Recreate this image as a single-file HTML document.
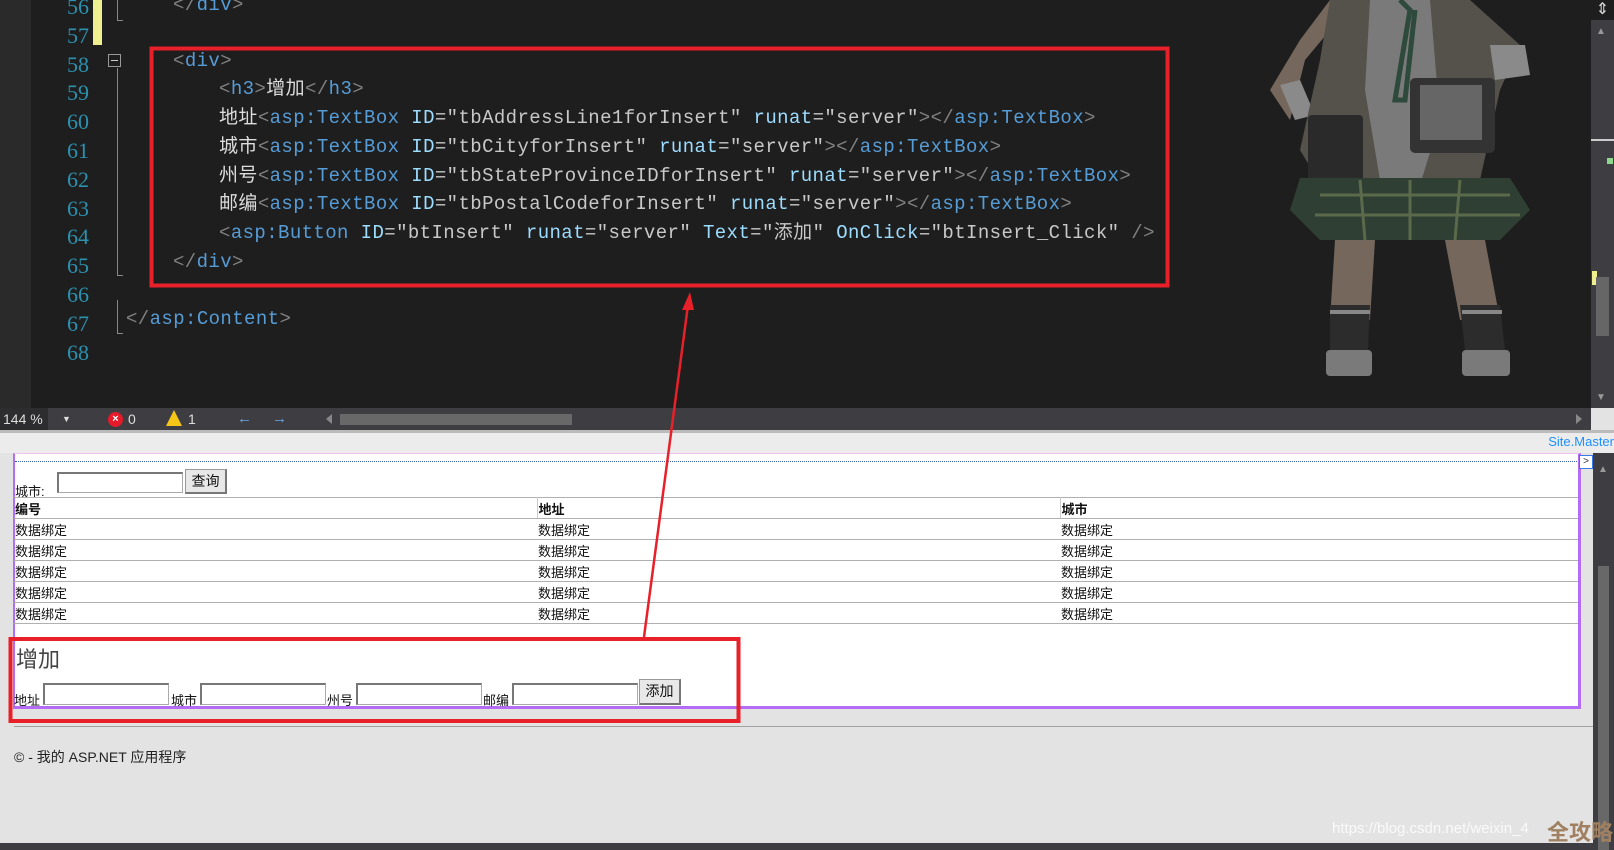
<!DOCTYPE html>
<html><head><meta charset="utf-8"><style>
*{margin:0;padding:0;box-sizing:border-box}
body{width:1614px;height:850px;overflow:hidden;background:#e3e3e3;position:relative;font-family:"Liberation Sans","Noto Sans CJK SC",sans-serif}
.a{position:absolute}
#ed{left:0;top:0;width:1614px;height:408px;background:#1e1e1e}
.ln{position:absolute;left:40px;width:49px;text-align:right;color:#2b91af;font-family:"Liberation Serif","Noto Serif CJK SC",serif;font-size:22px;line-height:29px}
.cd{position:absolute;font-family:"Liberation Mono","Noto Sans CJK SC",monospace;font-size:19px;line-height:29px;white-space:pre;color:#dcdcdc;letter-spacing:0.4px}
.g{color:#808080}.t{color:#569cd6}.at{color:#9cdcfe}.v{color:#c8c8c8}
.tb{position:absolute;background:#fff;border:1px solid #aaa;border-top:2px solid #777;border-left:2px solid #777}
.bt{position:absolute;background:#e8e8e8;border:1px solid #999;border-right:2px solid #777;border-bottom:2px solid #777;font-size:14px;text-align:center;line-height:22px;color:#111}
.lb{position:absolute;font-size:13px;color:#111}
td{font-size:13px;height:21px;border-bottom:1px solid #b0b0b0;padding:0 1px;vertical-align:middle;color:#111}
</style></head><body>
<div id="ed" class="a"></div>
<div class="a" style="left:0;top:0;width:31px;height:408px;background:#2a2a2a"></div>
<div class="a" style="left:93px;top:0;width:9px;height:45px;background:#efef8f"></div>
<div class="ln" style="top:-8px">56</div><div class="ln" style="top:21px">57</div><div class="ln" style="top:50px">58</div><div class="ln" style="top:78px">59</div><div class="ln" style="top:107px">60</div><div class="ln" style="top:136px">61</div><div class="ln" style="top:165px">62</div><div class="ln" style="top:194px">63</div><div class="ln" style="top:222px">64</div><div class="ln" style="top:251px">65</div><div class="ln" style="top:280px">66</div><div class="ln" style="top:309px">67</div><div class="ln" style="top:338px">68</div>
<div class="a" style="left:117px;top:0;width:1px;height:20px;background:#888"></div>
<div class="a" style="left:117px;top:20px;width:6px;height:1px;background:#888"></div>
<div class="a" style="left:108px;top:54px;width:13px;height:13px;border:1px solid #999;background:#1e1e1e"></div>
<div class="a" style="left:111px;top:60px;width:7px;height:1px;background:#ccc"></div>
<div class="a" style="left:117px;top:68px;width:1px;height:208px;background:#888"></div>
<div class="a" style="left:117px;top:275px;width:6px;height:1px;background:#888"></div>
<div class="a" style="left:117px;top:300px;width:1px;height:33px;background:#888"></div>
<div class="a" style="left:117px;top:333px;width:6px;height:1px;background:#888"></div>
<div class="cd" style="left:173px;top:-9px"><span class="g">&lt;/</span><span class="t">div</span><span class="g">&gt;</span></div>
<div class="cd" style="left:173px;top:47px"><span class="g">&lt;</span><span class="t">div</span><span class="g">&gt;</span></div>
<div class="cd" style="left:219px;top:75px"><span class="g">&lt;</span><span class="t">h3</span><span class="g">&gt;</span>增加<span class="g">&lt;/</span><span class="t">h3</span><span class="g">&gt;</span></div>
<div class="cd" style="left:219px;top:104px">地址<span class="g">&lt;</span><span class="t">asp:TextBox</span> <span class="at">ID</span><span class="v">="tbAddressLine1forInsert"</span> <span class="at">runat</span><span class="v">="server"</span><span class="g">&gt;&lt;/</span><span class="t">asp:TextBox</span><span class="g">&gt;</span></div>
<div class="cd" style="left:219px;top:133px">城市<span class="g">&lt;</span><span class="t">asp:TextBox</span> <span class="at">ID</span><span class="v">="tbCityforInsert"</span> <span class="at">runat</span><span class="v">="server"</span><span class="g">&gt;&lt;/</span><span class="t">asp:TextBox</span><span class="g">&gt;</span></div>
<div class="cd" style="left:219px;top:162px">州号<span class="g">&lt;</span><span class="t">asp:TextBox</span> <span class="at">ID</span><span class="v">="tbStateProvinceIDforInsert"</span> <span class="at">runat</span><span class="v">="server"</span><span class="g">&gt;&lt;/</span><span class="t">asp:TextBox</span><span class="g">&gt;</span></div>
<div class="cd" style="left:219px;top:190px">邮编<span class="g">&lt;</span><span class="t">asp:TextBox</span> <span class="at">ID</span><span class="v">="tbPostalCodeforInsert"</span> <span class="at">runat</span><span class="v">="server"</span><span class="g">&gt;&lt;/</span><span class="t">asp:TextBox</span><span class="g">&gt;</span></div>
<div class="cd" style="left:219px;top:219px"><span class="g">&lt;</span><span class="t">asp:Button</span> <span class="at">ID</span><span class="v">="btInsert"</span> <span class="at">runat</span><span class="v">="server"</span> <span class="at">Text</span><span class="v">="添加"</span> <span class="at">OnClick</span><span class="v">="btInsert_Click"</span> <span class="g">/&gt;</span></div>
<div class="cd" style="left:173px;top:248px"><span class="g">&lt;/</span><span class="t">div</span><span class="g">&gt;</span></div>
<div class="cd" style="left:126px;top:305px"><span class="g">&lt;/</span><span class="t">asp:Content</span><span class="g">&gt;</span></div>
<svg class="a" style="left:1260px;top:0" width="300" height="395" viewBox="0 0 300 395">
<path d="M70 0 L40 40 L10 90 L30 120 L45 60 L70 30 Z" fill="#76675d"/>
<path d="M20 85 L40 80 L55 115 L35 120 Z" fill="#8a8a8a"/>
<path d="M70 0 L210 0 L260 45 L240 90 L220 180 L70 200 L40 150 L60 60 Z" fill="#54524a"/>
<path d="M230 45 L265 45 L270 75 L235 80 Z" fill="#8a8a8a"/>
<path d="M110 0 L170 0 L180 120 L160 185 L120 180 L105 90 Z" fill="#7a7a7a"/>
<path d="M140 0 L150 10 L135 100 L145 100 L155 10" fill="none" stroke="#2d4a3c" stroke-width="5"/>
<rect x="150" y="78" width="85" height="75" rx="5" fill="#333"/><rect x="160" y="85" width="62" height="55" fill="#666"/>
<rect x="48" y="115" width="55" height="70" rx="4" fill="#2a2a2a"/>
<path d="M40 178 L250 178 L270 210 L240 240 L60 240 L30 210 Z" fill="#2f3f33"/>
<path d="M60 195 L250 195 M55 215 L260 215 M100 180 L105 240 M150 180 L150 240 M200 180 L195 240" stroke="#5a6a4a" stroke-width="3"/>
<path d="M75 240 L115 240 L110 320 L70 320 Z M185 240 L225 240 L240 320 L200 320 Z" fill="#76675d"/>
<path d="M70 305 L110 305 L108 350 L70 350 Z M200 305 L240 305 L245 350 L205 350 Z" fill="#2c2c2c"/>
<path d="M70 312 L110 312 M202 312 L242 312" stroke="#888" stroke-width="4"/>
<rect x="66" y="350" width="46" height="26" rx="4" fill="#7a7a7a"/><rect x="202" y="350" width="48" height="26" rx="4" fill="#7a7a7a"/>
</svg>
<div class="a" style="left:1591px;top:0;width:23px;height:408px;background:#3e3e42"></div>
<div class="a" style="left:1591px;top:0;width:23px;height:20px;background:#1e1e1e;color:#ddd;font-size:16px;text-align:center;line-height:20px">⇕</div>
<div class="a" style="left:1596px;top:26px;color:#999;font-size:10px">▲</div>
<div class="a" style="left:1596px;top:392px;color:#999;font-size:10px">▼</div>
<div class="a" style="left:1591px;top:139px;width:23px;height:2px;background:#ccc"></div>
<div class="a" style="left:1607px;top:158px;width:6px;height:6px;background:#8ed88e"></div>
<div class="a" style="left:1592px;top:271px;width:5px;height:14px;background:#efef8f"></div>
<div class="a" style="left:1596px;top:277px;width:13px;height:59px;background:#666"></div>
<div class="a" style="left:0;top:408px;width:1591px;height:22px;background:#3e3e42"></div>
<div class="a" style="left:0;top:408px;width:48px;height:22px;background:#2d2d30;color:#ddd;font-size:14px;line-height:22px;padding-left:3px">144 %</div>
<div class="a" style="left:62px;top:408px;color:#ddd;font-size:9px;line-height:22px">▼</div>
<div class="a" style="left:108px;top:412px;width:15px;height:15px;border-radius:50%;background:#e51a2a;color:#fff;font-size:11px;text-align:center;line-height:15px;font-weight:bold">×</div>
<div class="a" style="left:128px;top:408px;color:#ddd;font-size:14px;line-height:22px">0</div>
<div class="a" style="left:166px;top:410px;width:0;height:0;border-left:8px solid transparent;border-right:8px solid transparent;border-bottom:16px solid #f5c518"></div>
<div class="a" style="left:188px;top:408px;color:#ddd;font-size:14px;line-height:22px">1</div>
<div class="a" style="left:237px;top:408px;color:#6aa8e8;font-size:15px;line-height:22px">←</div>
<div class="a" style="left:272px;top:408px;color:#6aa8e8;font-size:15px;line-height:22px">→</div>
<div class="a" style="left:326px;top:414px;width:0;height:0;border-top:5px solid transparent;border-bottom:5px solid transparent;border-right:6px solid #888"></div>
<div class="a" style="left:340px;top:414px;width:232px;height:11px;background:#686868"></div>
<div class="a" style="left:1576px;top:414px;width:0;height:0;border-top:5px solid transparent;border-bottom:5px solid transparent;border-left:6px solid #888"></div>
<div class="a" style="left:0;top:430px;width:1614px;height:3px;background:#bbb"></div>
<div class="a" style="left:0;top:433px;width:1614px;height:20px;background:#ececec"></div>
<div class="a" style="right:0;top:433px;color:#1e90ff;font-size:13px;line-height:17px">Site.Master</div>
<div class="a" style="left:0;top:453px;width:1593px;height:390px;background:#e3e3e3"></div>
<div class="a" style="left:13px;top:453px;width:1568px;height:256px;background:#fff;border-left:2px solid #b56cf5;border-right:3px solid #b56cf5;border-bottom:3px solid #b56cf5;border-top:1px solid #f0c0f0"></div>
<div class="a" style="left:15px;top:461px;width:1562px;border-top:1px dotted #3a5ea8"></div>
<div class="a" style="left:1579px;top:455px;width:14px;height:14px;border:1px solid #3a7ae8;background:#fff;font-size:10px;text-align:center;line-height:12px;color:#333">&gt;</div>
<div class="lb" style="left:15px;top:481px">城市:</div>
<div class="tb" style="left:57px;top:472px;width:126px;height:21px"></div>
<div class="bt" style="left:185px;top:469px;width:42px;height:25px">查询</div>
<table class="a" style="left:14px;top:497px;width:1564px;border-collapse:collapse;border-top:1px solid #b0b0b0">
<tr><td style="width:523px;font-weight:bold">编号</td><td style="width:523px;font-weight:bold;border-left:1px solid #ccc">地址</td><td style="font-weight:bold;border-left:1px solid #ccc">城市</td></tr>
<tr><td>数据绑定</td><td>数据绑定</td><td>数据绑定</td></tr>
<tr><td>数据绑定</td><td>数据绑定</td><td>数据绑定</td></tr>
<tr><td>数据绑定</td><td>数据绑定</td><td>数据绑定</td></tr>
<tr><td>数据绑定</td><td>数据绑定</td><td>数据绑定</td></tr>
<tr><td>数据绑定</td><td>数据绑定</td><td>数据绑定</td></tr>
</table>
<div class="a" style="left:16px;top:642px;font-size:22px;color:#444">增加</div>
<div class="lb" style="left:14px;top:690px">地址</div><div class="tb" style="left:43px;top:683px;width:126px;height:22px"></div>
<div class="lb" style="left:171px;top:690px">城市</div><div class="tb" style="left:200px;top:683px;width:126px;height:22px"></div>
<div class="lb" style="left:327px;top:690px">州号</div><div class="tb" style="left:356px;top:683px;width:126px;height:22px"></div>
<div class="lb" style="left:483px;top:690px">邮编</div><div class="tb" style="left:512px;top:683px;width:126px;height:22px"></div>
<div class="bt" style="left:639px;top:679px;width:42px;height:26px">添加</div>
<div class="a" style="left:14px;top:726px;width:1579px;height:1px;background:#a0a0a0"></div>
<div class="a" style="left:14px;top:747px;font-size:14px;color:#222">© - 我的 ASP.NET 应用程序</div>
<div class="a" style="left:1593px;top:453px;width:21px;height:397px;background:#3e3e42"></div>
<div class="a" style="left:1598px;top:464px;color:#999;font-size:10px">▲</div>
<div class="a" style="left:1598px;top:566px;width:11px;height:284px;background:#686868"></div>
<div class="a" style="left:0;top:843px;width:1593px;height:7px;background:#3e3e42"></div>
<div class="a" style="left:1332px;top:820px;font-size:15px;color:rgba(255,255,255,.8)">https://blog.csdn.net/weixin_4</div>
<div class="a" style="left:1547px;top:815px;font-size:22px;font-weight:bold;color:#a08060">全攻略</div>
<svg class="a" style="left:0;top:0" width="1614" height="850">
<rect x="151.5" y="48.5" width="1016" height="237" fill="none" stroke="#e8202a" stroke-width="4"/>
<rect x="10.5" y="639" width="728" height="82" fill="none" stroke="#e8202a" stroke-width="4"/>
<line x1="644" y1="637" x2="688" y2="305" stroke="#e8202a" stroke-width="2.5"/>
<path d="M690 292 L682 310 L694 310 Z" fill="#e8202a"/>
</svg>
</body></html>
